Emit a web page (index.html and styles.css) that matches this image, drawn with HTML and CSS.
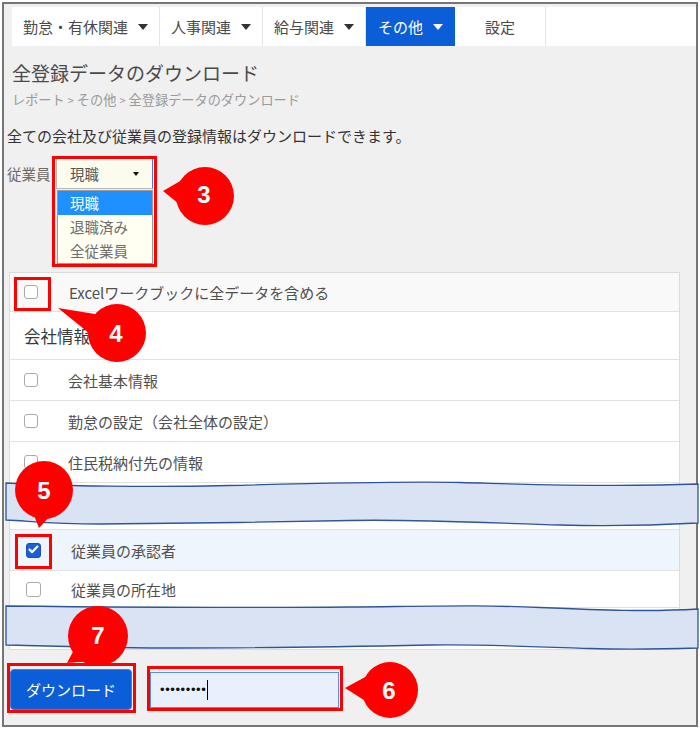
FILE: index.html
```html
<!DOCTYPE html>
<html lang="ja">
<head>
<meta charset="utf-8">
<title>全登録データのダウンロード</title>
<link rel="stylesheet" href="styles.css">
</head>
<body>
<div class="frame">
  <nav class="nav">
    <div class="nav-item">勤怠・有休関連<span class="caret"></span></div>
    <div class="nav-item">人事関連<span class="caret"></span></div>
    <div class="nav-item">給与関連<span class="caret"></span></div>
    <div class="nav-item active">その他<span class="caret"></span></div>
    <div class="nav-item setting">設定</div>
  </nav>
  <main class="page">
    <h1 class="title">全登録データのダウンロード</h1>
    <div class="crumbs">レポート<span class="sep">&gt;</span>その他<span class="sep">&gt;</span>全登録データのダウンロード</div>
    <p class="desc">全ての会社及び従業員の登録情報はダウンロードできます。</p>
    <div class="filter">
      <span class="filter-label">従業員</span>
      <div class="select-wrap">
        <div class="select">現職<span class="select-arrow"></span></div>
        <ul class="options">
          <li class="on">現職</li>
          <li>退職済み</li>
          <li>全従業員</li>
        </ul>
      </div>
    </div>
    <div class="table">
      <div class="row head"><span class="cb"></span>Excelワークブックに全データを含める</div>
      <div class="row section">会社情報</div>
      <div class="row"><span class="cb"></span>会社基本情報</div>
      <div class="row"><span class="cb"></span>勤怠の設定（会社全体の設定）</div>
      <div class="row"><span class="cb"></span>住民税納付先の情報</div>
      <div class="row gap1"></div>
      <div class="row emp sel"><span class="cb checked"><svg viewBox="0 0 15 15" width="15" height="15"><path d="M3.6 7.6 L6.2 10.1 L11.4 4.6" /></svg></span>従業員の承認者</div>
      <div class="row emp short"><span class="cb"></span>従業員の所在地</div>
      <div class="row gap2"></div>
    </div>
    <div class="actions">
      <button class="btn" type="button">ダウンロード</button>
      <div class="pw"><span class="dots">•••••••••</span><span class="cursor"></span></div>
    </div>
  </main>
</div>
<svg class="overlay" viewBox="0 0 700 730" width="700" height="730">
  <path class="band" d="M6,483 C 60,486 150,487.5 230,485.5 S 400,481 460,482.5 S 600,487.5 698,484 L 698,523 C 660,525 620,526.5 560,525 S 420,519 350,520.5 S 150,524 100,524 S 30,521 6,520 Z"/>
  <path class="band" d="M6,606 C 100,607 250,608 350,607 S 480,605 540,607.5 S 650,612 698,609 L 698,648 C 650,649.5 620,649.5 590,648.5 S 480,644 430,645 S 250,648 180,648 S 50,646 6,645 Z"/>
  <rect class="mark" x="53.5" y="157.5" width="102" height="108"/>
  <rect class="mark" x="15.5" y="278.5" width="34" height="31"/>
  <rect class="mark" x="16.5" y="535.5" width="34" height="32"/>
  <rect class="mark" x="8.5" y="664.5" width="126" height="47"/>
  <rect class="mark" x="148.5" y="667.5" width="193" height="42"/>
  <g class="badge">
    <polygon points="163,191 182,180 184,208"/>
    <circle cx="205" cy="196" r="29"/>
    <text x="204" y="203">3</text>
  </g>
  <g class="badge">
    <polygon points="58,308 95,314 100,342"/>
    <circle cx="117" cy="333" r="29"/>
    <text x="116" y="342">4</text>
  </g>
  <g class="badge">
    <polygon points="39,528 32,510 55,511"/>
    <circle cx="44" cy="490" r="29"/>
    <text x="44" y="499">5</text>
  </g>
  <g class="badge">
    <polygon points="345,688 367,676 367,702"/>
    <circle cx="390" cy="690" r="28"/>
    <text x="389" y="699">6</text>
  </g>
  <g class="badge">
    <polygon points="67,663 75,648 93,661"/>
    <circle cx="98" cy="636" r="30"/>
    <text x="98" y="644">7</text>
  </g>
</svg>
</body>
</html>
```
FILE: styles.css
```css
* { box-sizing: border-box; }
html, body { margin: 0; padding: 0; }
body {
  width: 700px;
  height: 730px;
  overflow: hidden;
  background: #fff;
  font-family: "Noto Sans CJK JP", "Noto Sans", sans-serif;
  color: #444;
}
.frame {
  margin: 2px 0 0 2px;
  width: 696px;
  height: 725px;
  border: 2px solid #767676;
  background: #f0f0f0;
}
/* nav */
.nav {
  display: flex;
  height: 39px;
  margin: 3px 0 0 8px;
  background: #fff;
}
.nav-item {
  display: flex;
  align-items: center;
  gap: 10px;
  padding: 0 11px;
  font-size: 15px;
  line-height: 1;
  color: #4a4a4a;
  border-right: 1px solid #e6e6e6;
}
.caret {
  width: 0;
  height: 0;
  border-left: 5px solid transparent;
  border-right: 5px solid transparent;
  border-top: 6px solid #333;
}
.nav-item.active {
  background: #0b5ed7;
  color: #fff;
  padding: 0 12px;
  border-right: none;
}
.nav-item.active .caret { border-top-color: #fff; }
.nav-item.setting {
  width: 91px;
  padding: 0;
  justify-content: center;
}
/* page */
.page { padding-left: 3px; }
.title {
  margin: 15px 0 0 5px;
  font-size: 19px;
  font-weight: normal;
  line-height: 24px;
  color: #4a4a4a;
}
.crumbs {
  margin: 6px 0 0 5px;
  font-size: 13.2px;
  line-height: 18px;
  color: #9a9a9a;
}
.sep { margin: 0 3px; font-size: 11px; }
.desc {
  margin: 17px 0 0 0;
  font-size: 15px;
  line-height: 20px;
  color: #333;
}
.filter {
  display: flex;
  align-items: center;
  height: 31px;
  margin-top: 12px;
}
.filter-label {
  width: 49px;
  font-size: 14.5px;
  color: #6a6a6a;
}
.select-wrap { position: relative; }
.select {
  position: relative;
  display: flex;
  align-items: center;
  width: 97px;
  height: 31px;
  padding-left: 13px;
  background: #fcfcee;
  border: 1px solid #b8b8b8;
  border-right-color: #3b7ddd;
  font-size: 14.5px;
  color: #555;
}
.select-arrow {
  position: absolute;
  right: 13px;
  top: 13px;
  width: 0;
  height: 0;
  border-left: 3.5px solid transparent;
  border-right: 3.5px solid transparent;
  border-top: 4px solid #111;
}
.options {
  position: absolute;
  left: 1px;
  top: 32px;
  width: 96px;
  margin: 0;
  padding: 0;
  list-style: none;
  background: #fffff2;
  border: 1px solid #9a9a9a;
}
.options li {
  height: 24px;
  line-height: 24px;
  padding-left: 12px;
  font-size: 14.5px;
  color: #6e6e6e;
}
.options li.on { background: #1e90ff; color: #fff; }
/* table */
.table {
  margin: 83px 0 0 2px;
  width: 671px;
  border: 1px solid #dcdcdc;
  background: #fff;
}
.row {
  display: flex;
  align-items: center;
  height: 41px;
  padding-left: 14px;
  border-bottom: 1px solid #e2e2e2;
  font-size: 15px;
  color: #505050;
}
.row.head { height: 39px; background: #f9f9f9; }
.row.head .cb { margin-right: 31px; }
.row.section { height: 48px; font-size: 16.5px; color: #3a3a3a; }
.row.gap1 { height: 47px; }
.row.emp { padding-left: 16px; }
.row.emp .cb { width: 15px; height: 15px; }
.row.sel { background: #eef5fd; }
.row.short { height: 37px; }
.row.gap2 { height: 41px; border-bottom: none; }
.cb {
  flex: none;
  width: 14px;
  height: 14px;
  margin-right: 30px;
  border: 1.5px solid #aaa;
  border-radius: 3px;
  background: #fff;
}
.cb.checked {
  position: relative;
  background: #1a5fd6;
  border-color: #1a4fb0;
}
.cb.checked svg {
  position: absolute;
  left: -1.5px;
  top: -1.5px;
}
.cb.checked path {
  fill: none;
  stroke: #fff;
  stroke-width: 2.2;
  stroke-linecap: round;
  stroke-linejoin: round;
}
/* actions */
.actions {
  display: flex;
  align-items: center;
  margin: 19px 0 0 3px;
}
.btn {
  width: 122px;
  height: 41px;
  padding: 0;
  background: #0b5ed7;
  color: #fff;
  border: 1px solid #3f7fe0;
  border-radius: 4px;
  font-family: "Noto Sans CJK JP", "Noto Sans", sans-serif;
  font-size: 15px;
}
.pw {
  display: flex;
  align-items: center;
  width: 189px;
  height: 36px;
  margin-left: 18px;
  padding-left: 9px;
  background: #e8f0fe;
  border: 1px solid #5b8fdc;
}
.dots {
  font-family: "Liberation Sans", Arial, sans-serif;
  font-size: 13px;
  letter-spacing: 0.6px;
  color: #111;
}
.cursor {
  width: 1px;
  height: 20px;
  margin-left: 1px;
  background: #000;
}
/* annotation overlay */
.overlay {
  position: absolute;
  left: 0;
  top: 0;
  pointer-events: none;
}
.band {
  fill: #dae3f3;
  stroke: #2f5597;
  stroke-width: 1.3;
}
.mark {
  fill: none;
  stroke: #ff0000;
  stroke-width: 3;
}
.badge polygon,
.badge circle { fill: #ff0000; }
.badge text {
  fill: #fff;
  font-family: "Liberation Sans", Arial, sans-serif;
  font-weight: bold;
  font-size: 24px;
  text-anchor: middle;
}
```
